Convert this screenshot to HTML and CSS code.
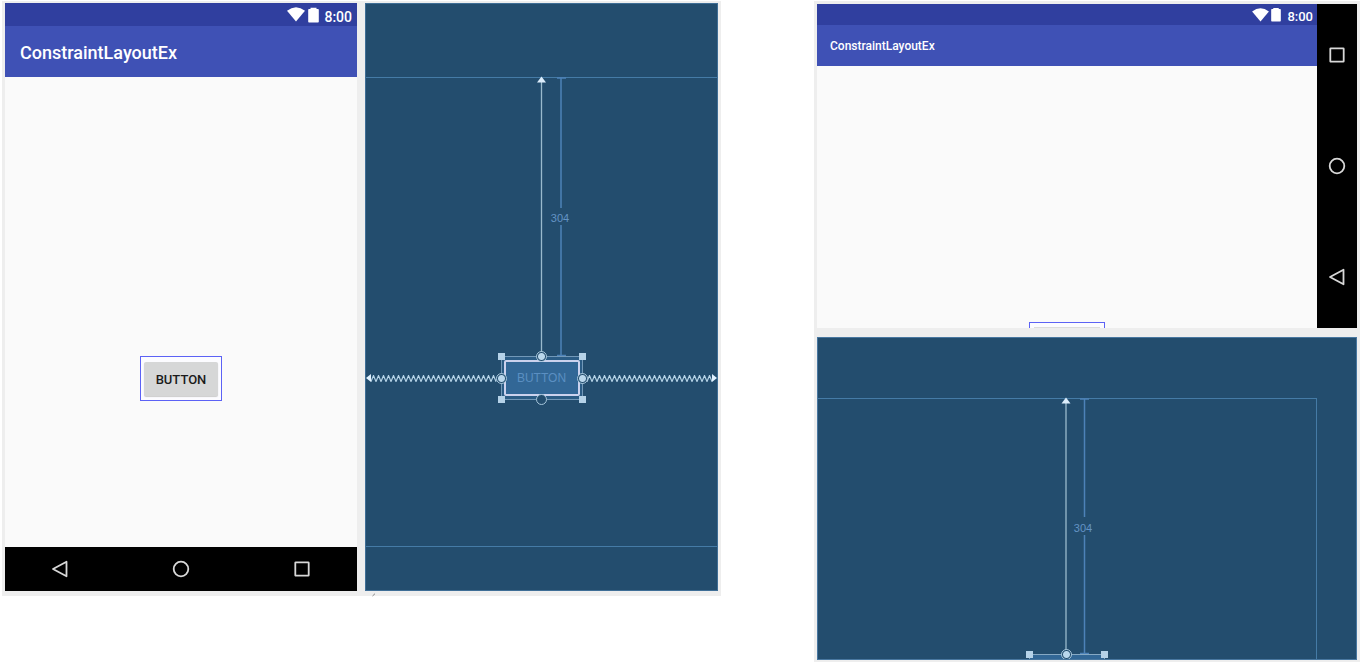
FILE: index.html
```html
<!DOCTYPE html>
<html lang="en">
<head>
<meta charset="utf-8">
<title>ConstraintLayoutEx</title>
<link rel="stylesheet" href="styles.css">
</head>
<body>
<svg class="defs" aria-hidden="true">
  <defs>
    <symbol id="wifi" viewBox="0 0 18 15"><path d="M0 3.8Q9-3.2 18 3.8L9 14.5Z"/></symbol>
    <symbol id="battery" viewBox="0 0 11 16"><path d="M2.500 .8h6V2h1.500q.8 0 .8 .8v12q0 .8-.8 .8H1q-.8 0-.8-.8V2.800q0-.8 .8-.8H2.500Z"/></symbol>
    <symbol id="back" viewBox="0 0 18 18"><path d="M15.500 1.700v14.600L2 9Z"/></symbol>
    <symbol id="home" viewBox="0 0 18 18"><circle cx="9" cy="9" r="7.300"/></symbol>
    <symbol id="recent" viewBox="0 0 18 18"><rect x="2.300" y="2.300" width="13.400" height="13.400" rx=".5"/></symbol>
    <pattern id="spring" width="5" height="7" patternUnits="userSpaceOnUse"><path d="M-1.250 3.500L0 6.500L2.500 .5L5 6.500L6.250 3.500" fill="none" stroke="#b4d2e6" stroke-width="1.200"/></pattern>
  </defs>
</svg>
<main class="page">
  <section class="editor editor-portrait">
    <div class="device portrait">
      <div class="status"><svg class="wifi"><use href="#wifi"/></svg><svg class="battery"><use href="#battery"/></svg><span>8:00</span></div>
      <h1 class="appbar">ConstraintLayoutEx</h1>
      <div class="content"><div class="selected"><button class="app-button" type="button">BUTTON</button></div></div>
      <nav class="nav">
        <button type="button" aria-label="Back"><svg><use href="#back"/></svg></button>
        <button type="button" aria-label="Home"><svg><use href="#home"/></svg></button>
        <button type="button" aria-label="Recent apps"><svg><use href="#recent"/></svg></button>
      </nav>
    </div>
    <div class="blueprint blueprint-tall">
      <div class="canvas">
        <svg class="vertical" viewBox="0 0 82 279">
          <path class="arrow-line" d="M40.500 4V276"/><path class="arrow-head" d="M36 5.500L40.500-.5L45 5.500Z"/>
          <path class="measure" d="M60 .5V131M60 148V278.500M56 1h9M56 278.500h9"/>
          <text class="value" x="59" y="145">304</text>
        </svg>
        <div class="anchor-row">
          <div class="spring left"><svg><rect width="100%" height="7" fill="url(#spring)"/></svg></div>
          <div class="widget">
            <button type="button">BUTTON</button>
            <i class="handle tl"></i><i class="handle tr"></i><i class="handle bl"></i><i class="handle br"></i>
            <i class="anchor linked top"></i><i class="anchor linked west"></i><i class="anchor linked east"></i><i class="anchor bottom"></i>
          </div>
          <div class="spring right"><svg><rect width="100%" height="7" fill="url(#spring)"/></svg></div>
        </div>
      </div>
    </div>
    <svg class="tick" viewBox="0 0 4 4"><path d="M.5 3L3 .7" stroke="#888"/></svg>
  </section>
  <section class="editor editor-landscape">
    <div class="device landscape">
      <div class="screen">
        <div class="status"><svg class="wifi"><use href="#wifi"/></svg><svg class="battery"><use href="#battery"/></svg><span>8:00</span></div>
        <h2 class="appbar">ConstraintLayoutEx</h2>
        <div class="content"><div class="selected clipped"><div class="button-edge"></div></div></div>
      </div>
      <nav class="nav">
        <button type="button" aria-label="Recent apps"><svg><use href="#recent"/></svg></button>
        <button type="button" aria-label="Home"><svg><use href="#home"/></svg></button>
        <button type="button" aria-label="Back"><svg><use href="#back"/></svg></button>
      </nav>
    </div>
    <div class="blueprint blueprint-wide">
      <div class="canvas">
        <svg class="vertical" viewBox="0 0 76 256">
          <path class="arrow-line" d="M37 4V253"/><path class="arrow-head" d="M32.500 5.500L37-.5L41.500 5.500Z"/>
          <path class="measure" d="M55.500 .5V119M55.500 137V256M51 1h9M51 255.500h9"/>
          <text class="value" x="54" y="134">304</text>
        </svg>
        <div class="widget">
          <i class="handle tl"></i><i class="handle tr"></i><i class="anchor linked top"></i>
        </div>
      </div>
    </div>
  </section>
</main>
</body>
</html>
```
FILE: styles.css
```css
* { box-sizing: border-box; }
body { margin: 0; background: #fff; font-family: Roboto, "Liberation Sans", sans-serif; }
button { font-family: inherit; padding: 0; border: 0; background: none; }
svg { display: block; flex: none; }
.defs { position: absolute; width: 0; height: 0; }

.page { display: grid; grid-template-columns: 719fr 546fr; gap: 93px; align-items: start; padding: 1px 0 0 2px; }
.editor { background: #eee; display: grid; gap: 8px; }
.editor-portrait { position: relative; grid-template-columns: 352fr 353fr; padding: 2px 3px 5px; }
.editor-landscape { padding: 3px 3px 2px; gap: 9px; }

.status { display: flex; align-items: center; justify-content: flex-end; background: #303f9f; color: #fff; font-weight: 500; }
.status svg { fill: #fff; }
.wifi { width: 18px; height: 15px; }
.battery { width: 11px; height: 16px; }
.appbar { margin: 0; display: flex; align-items: center; background: #3f51b5; color: #fff; font-weight: 500; }
.content { display: flex; flex-direction: column; align-items: center; background: #fafafa; }
.nav { display: flex; align-items: center; justify-content: space-between; background: #000; }
.nav svg { width: 18px; height: 18px; fill: none; stroke: #d8d8d8; stroke-width: 1.8px; stroke-linejoin: round; }

.portrait { display: grid; grid-template-rows: 23px 51px 470px 44px; }
.portrait .status { padding: 0 5px 0 0; gap: 3px; font-size: 14px; }
.portrait .status span { padding: 5px 0 0 2px; }
.portrait .appbar { padding: 1px 15px 0; font-size: 18px; }
.portrait .content { padding-top: 279px; }
.portrait .nav { padding: 0 46px; }
.selected { width: 82px; height: 45px; padding: 5px 3px 3px; border: 1px solid #5c62f5; background: #fcfcff; }
.app-button { display: block; width: 100%; height: 34px; border-radius: 2px; background: #d6d7d7; box-shadow: 0 1px 1px #ccc; color: #1b1b1b; font-size: 13px; font-weight: 500; }

.landscape { display: grid; grid-template-columns: 1fr 40px; }
.screen { display: grid; grid-template-rows: 21px 41px 262px; }
.landscape .status { padding: 0 4px 0 0; gap: 2px; font-size: 13px; }
.landscape .status span { padding: 4px 0 0 4px; }
.landscape .wifi { width: 17px; height: 14px; }
.landscape .battery { width: 10px; height: 15px; }
.landscape .appbar { padding: 0 13px; font-size: 12px; }
.landscape .content { padding-top: 256px; }
.landscape .nav { flex-direction: column; padding: 42px 0; }
.clipped { width: 76px; height: 6px; padding: 4px 4px 0; border-bottom: 0; }
.button-edge { height: 1px; background: #ddd; }

.blueprint { display: grid; background: #234d6e; border: 1px solid #5079a0; overflow: hidden; }
.blueprint-tall { padding: 73px 0 43px; border-color: #3f6e96; }
.blueprint-wide { height: 323px; padding: 60px 39px 0 0; border-color: #4877a0; }
.canvas { display: flex; flex-direction: column; align-items: center; border: 0 solid #457ba6; }
.blueprint-tall .canvas { border-width: 1px 0; }
.blueprint-wide .canvas { border-width: 1px 1px 0 0; }
.vertical { overflow: visible; width: 82px; height: 279px; margin-top: -1px; }
.blueprint-wide .vertical { width: 76px; height: 256px; }
.arrow-line { stroke: #9abacd; stroke-width: 1.3px; }
.arrow-head { fill: #dcedfb; }
.measure { fill: none; stroke: #4d82b8; stroke-width: 1.5px; }
.value { fill: #6394c5; font: 11px "Liberation Sans", sans-serif; text-anchor: middle; }
.anchor-row { align-self: stretch; display: grid; grid-template-columns: 1fr auto 1fr; align-items: center; }
.spring { display: flex; align-items: center; }
.spring.left { padding-right: 4px; }
.spring.right { padding-left: 4px; }
.spring svg { flex: 1; min-width: 0; width: 0; height: 7px; }
.left::before, .right::after { content: ""; border: 4px solid transparent; }
.left::before { border-left: 0; border-right: 5px solid #e0f1ff; }
.right::after { border-right: 0; border-left: 5px solid #e0f1ff; }
.widget { position: relative; width: 82px; height: 44px; padding: 3px 2px; border: 1px solid #7298b8; background: #2b5c85; }
.widget button { display: block; width: 100%; height: 36px; border: 2px solid #cbd2ee; border-radius: 2px; background: #326796; color: #5b8fc2; font: 12px "Liberation Sans", sans-serif; }
.blueprint-wide .widget { width: 76px; height: 8px; border-color: #86a9c4; background: #326796; }
.handle { position: absolute; width: 7px; height: 7px; background: #b5d2e8; }
.tl { top: -4px; left: -4px; }
.tr { top: -4px; right: -4px; }
.bl { bottom: -4px; left: -4px; }
.br { bottom: -4px; right: -4px; }
.anchor { position: absolute; width: 11px; height: 11px; border: 1px solid #a8c7dc; border-radius: 50%; background: #234d6e; }
.linked { background: radial-gradient(circle, #bad7ec 3px, #234d6e 4px); }
.top { top: -6px; left: calc(50% - 6px); }
.bottom { bottom: -6px; left: calc(50% - 6px); }
.west { left: -6px; top: calc(50% - 5px); }
.east { right: -6px; top: calc(50% - 5px); }
.tick { position: absolute; left: calc(50% + 10px); bottom: -1px; width: 4px; height: 4px; }
```
